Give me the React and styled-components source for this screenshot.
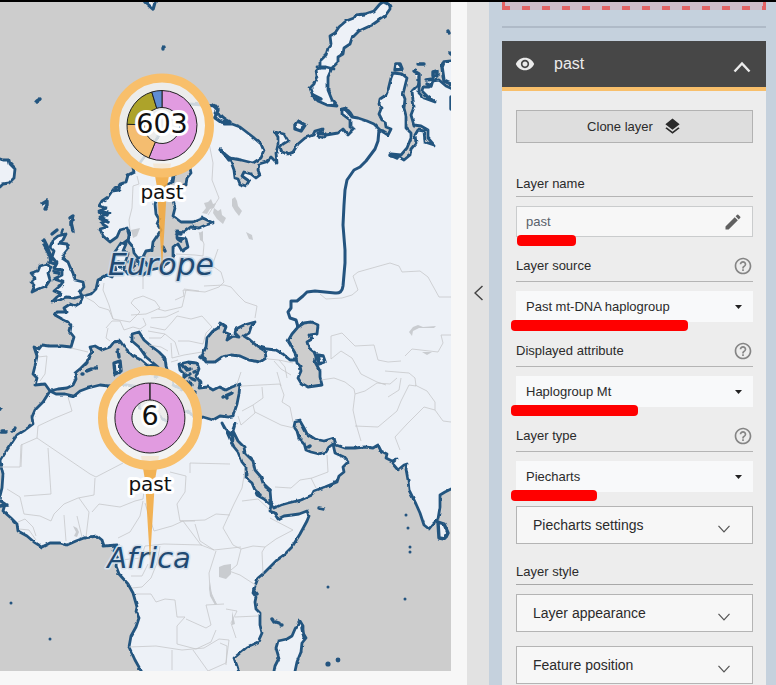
import React from "react";
import styled, { createGlobalStyle } from "styled-components";
import { MdVisibility, MdLayers, MdEdit, MdHelpOutline } from "react-icons/md";

const GlobalStyle = createGlobalStyle`
  *, *::before, *::after { box-sizing: border-box; }
  body {
    margin: 0;
    background: #f7f7f7;
    color: #2b2b2b;
    font-family: "Liberation Sans", Arial, sans-serif;
    font-size: 13px;
  }
  button, input, select { font: inherit; color: inherit; margin: 0; }
`;

const Page = styled.div`
  display: flex;
  height: 100vh;
  border-top: 2px solid #000;
  overflow: hidden;
`;

const MapPane = styled.main`
  flex: 1;
  min-width: 0;
  padding: 0 16px 14px 0;
`;

const MapCanvas = styled.svg`
  display: block;
  width: 100%;
  height: 100%;
  background: #cdcdcd;
  font-family: "DejaVu Sans", sans-serif;
`;

const CollapseHandle = styled.button`
  flex: 0 0 22px;
  display: flex;
  align-items: center;
  justify-content: center;
  padding: 0 0 102px;
  border: 0;
  background: #e2e2e2;
  color: #444;
`;

const Sidebar = styled.aside`
  flex: 0 0 287px;
  padding: 0 10px 0 13px;
  background: #c5d1dd;
  overflow-y: auto;
  scrollbar-width: none;
`;

const DropZone = styled.div`
  height: 8px;
  border: solid #e26464;
  border-width: 0 3px;
  background:
    repeating-linear-gradient(90deg, #e26464 0 5px, transparent 5px 17px, #e26464 17px 20px) bottom / 100% 4px no-repeat,
    #cdbcc8;
`;

const Divider = styled.hr`
  height: 2px;
  margin: 16px 0 13px;
  border: 0;
  background: #afbac7;
`;

const Card = styled.section`
  background: #ededed;
`;

const CardHeader = styled.button`
  display: flex;
  align-items: center;
  width: 100%;
  height: 50px;
  padding: 0 15px 0 13px;
  border: 0;
  border-bottom: 4px solid #f8bf6b;
  background: #474747;
  color: #ececec;
  font-size: 16px;
  text-align: left;
`;

const HeaderTitle = styled.span`
  flex: 1;
  padding-left: 19px;
`;

const HeaderChevron = styled.svg`
  margin-top: 6px;
`;

const CardBody = styled.div`
  display: flex;
  flex-direction: column;
  padding: 19px 13px 12px 14px;
`;

const CloneButton = styled.button`
  display: flex;
  align-items: center;
  justify-content: center;
  gap: 10px;
  height: 33px;
  margin-bottom: 9px;
  border: 1px solid #b2b2b2;
  background: #dedede;
`;

const Field = styled.div`
  margin-top: 19px;
`;

const TitleRow = styled.div`
  display: flex;
  align-items: center;
  justify-content: space-between;
  height: 26px;
  margin-bottom: 9px;
  padding-bottom: ${(p) => (p.$raised ? "6px" : "0")};
  border-bottom: 1px solid #b4b4b4;
`;

const HelpButton = styled.button`
  display: flex;
  padding: 0;
  border: 0;
  background: none;
  color: #858585;
`;

const Control = styled.div`
  position: relative;
`;

const controlIcon = `
  position: absolute;
  top: 50%;
  transform: translateY(-50%);
  pointer-events: none;
`;

const NameInput = styled.input`
  display: block;
  width: 100%;
  height: 31px;
  padding: 0 40px 0 9px;
  border: 1px solid #cacccd;
  border-radius: 0;
  background: #f7f7f7;
  color: #59616a;
`;

const EditIcon = styled(MdEdit)`
  ${controlIcon}
  right: 10px;
  color: #606060;
`;

const Select = styled.select`
  appearance: none;
  display: block;
  width: 100%;
  height: 31px;
  padding: 0 30px 0 10px;
  border: 0;
  border-radius: 0;
  background: #f8f9fa;
`;

const Caret = styled.svg`
  ${controlIcon}
  right: 11px;
`;

const RedMark = styled.span`
  position: absolute;
  bottom: -9px;
  left: ${(p) => p.$left}px;
  width: ${(p) => p.$width}px;
  height: 11px;
  border-radius: 4px;
  background: #f00;
  pointer-events: none;
`;

const StyleHeading = styled.h3`
  display: flex;
  align-items: center;
  height: 26px;
  margin: 15px 0 9px;
  border-bottom: 1px solid #a8a8a8;
  font-size: 13px;
  font-weight: 400;
`;

const Accordion = styled.button`
  display: flex;
  align-items: center;
  justify-content: space-between;
  height: 38px;
  margin-top: ${(p) => p.$gap || 0}px;
  padding: 0 22px 1px 16px;
  border: 1px solid #b4b4b4;
  background: #f7f7f7;
  font-size: 14px;

  svg { margin-top: 8px; }
`;

function ChevronDown() {
  return (
    <svg width="12" height="8" viewBox="0 0 12 8" fill="none" stroke="#555" aria-hidden="true">
      <path d="M0.5 0.8 6 6.8 11.5 0.8" strokeWidth="1.2" />
    </svg>
  );
}

function SelectField({ id, label, options, mark }) {
  return (
    <Field>
      <TitleRow $raised>
        <label htmlFor={id}>{label}</label>
        <HelpButton type="button" aria-label={`Help: ${label}`}>
          <MdHelpOutline size={20} />
        </HelpButton>
      </TitleRow>
      <Control>
        <Select id={id}>
          {options.map((o) => (
            <option key={o}>{o}</option>
          ))}
        </Select>
        <Caret width="7" height="4" viewBox="0 0 7 4" aria-hidden="true">
          <path d="M0 0H7L3.5 4Z" fill="#222" />
        </Caret>
        <RedMark $left={-5} $width={mark} />
      </Control>
    </Field>
  );
}

const MAINLAND = `M216 106 L190 104 178 112 165 126 156 140 148 152 139 164 133 168 134 172 128 175 126 182 120 184
 119 190 112 191 108 197 102 201 99 206 107 208 99 211 109 213 100 217 108 220 101 223 107 227 100 229 103 236 110 242 117 237 120 230 127 228 129 235
 128 241 133 247 134 253 138 258 143 257 146 251 152 250 153 242 157 236 161 230 157 224 159 219 156 214
 155 204 158 196 163 188 172 182 173 176 180 171 190 168 191 173 187 178 186 184 179 187 178 194 173 200 175 208 173 216 181 222 193 222 203 218 213 223
 206 225 199 228 191 227 184 232 177 231 177 238 186 239 188 247 182 251 178 244 173 248 173 258 168 263
 160 268 150 270 143 275 134 272 128 274 124 269 125 262 128 254 123 251 126 244 121 243 117 249 114 253 114 263 116 270 112 277 107 275 98 280 96 289
 91 294 83 296 80 303 75 306 70 304 64 308 66 312 57 312 55 315 62 319 68 322 71 326 70 332 74 337 71 347
 62 346 50 346 42 345 39 349 34 347 37 356 35 366 33 374 37 378 35 385 45 384 50 391
 43 402 35 410 32 417 33 424 25 430 17 435 11 444 7 450 0 461 3 474 2 488 -1 500 5 504 3 511 11 518
 17 524 18 531 27 536 34 542 42 547 50 543 60 543 67 545 76 541 84 538 97 536 102 540 104 546 117 545 113 551 118 558 116 566
 119 574 128 584 133 593 137 607 136 612 139 618 136 627 131 636 129 647 135 660 144 676 L240 676
 237 666 234 658 247 647 258 642 262 633 260 625 260 613 256 609 255 602 256 597 253 593 255 586 258 578
 264 573 277 560 284 555 292 547 300 534 307 521 309 516 307 511 299 514 292 515 284 516 278 519 274 513 270 511 271 505 264 499 257 495 252 483 246 478 246 467
 242 462 238 452 234 447 230 439 226 430 222 423 225 429 232 435 233 440 L232 432 235 424 233 431 238 441 244 447 245 453 253 461 255 470 261 477 263 483 270 490
 271 502 274 508 281 505 288 503 301 500 312 495 314 491 325 487 337 482 339 476 344 472 343 467 348 462 344 457 335 453 333 444 329 447 326 452
 319 454 311 452 306 450 304 443 299 438 297 431 294 427 295 422 300 421 304 428 307 434 315 439 324 441
 334 438 336 445 345 448 355 448 365 447 373 448 378 445 381 451 387 454 386 458 392 461 397 459 392 463 398 470
 404 465 407 464 406 469 408 480 409 490 416 504 420 513 424 525 429 529 433 524 438 519 440 507 440 495 445 492 455 487
 L455 90 446 86 439 80 432 81 430 87 423 87 422 91 428 97 435 102 424 98 419 93 419 84 412 91 413 100 414 107 411 115 414 125
 421 126 428 130 428 138 434 145 425 142 424 131 418 130 415 135 416 143 411 149 410 155 404 160 399 157 390 156 391 154 401 155
 407 148 411 138 411 133 406 128 406 116 404 108 405 99 403 94 407 78 402 74 393 73 391 78 388 90 386 95 380 99 379 104 381 109
 379 114 382 120 385 121 386 127 391 129 388 135 380 130 374 124 367 121 358 118 352 117 345 109 342 109 342 114 350 120
 350 127 354 129 348 135 343 129 338 133 326 135 324 138 318 136 322 129 315 131 313 135 305 138 298 144 293 152 288 154 282 152
 280 147 283 144 288 141 284 134 275 132 278 137 278 145 276 153 277 163 271 157 266 162 259 164 258 170 260 175 256 178 251 174
 244 172 242 176 249 181 246 186 240 184 238 179 235 178 234 170 230 159 221 151 230 158 241 160 253 163 261 158 264 151
 261 144 253 137 240 127 232 124 224 124 227 121 221 115 214 113 217 108Z`;

const MEDITERRANEAN = `M50 391 L58 389 67 388 73 385 76 379 75 373 81 368 87 362 89 356 92 352 90 347 95 346 102 350 110 347 114 342 120 341 125 348
 133 356 141 360 148 366 154 365 158 371 155 377 161 374 158 367 152 362 146 357 139 347 132 341 132 334 139 332 144 340 151 346 159 352 165 358 166 366 168 373
 173 379 174 385 181 389 185 388 181 380 186 376 180 370 179 364 188 362 197 363 199 369 196 376 200 382 199 388 208 387 213 390
 219 387 226 390 232 387 240 384 239 394 237 404 233 416 228 417 220 416 213 420 203 417 197 420 188 411 178 414
 176 424 166 421 155 412 139 408 140 399 142 388 133 386 120 384 109 386 100 385 88 388 80 391 74 396 65 394 56 394Z`;

const BLACK_SEA = `M206 362 L202 355 206 347 207 338 213 331 218 328 220 323 226 327 224 332 229 334 227 340 233 336 239 337
 235 333 236 329 244 325 255 322 251 327 249 333 244 336 250 340 257 346 265 351 266 358 260 362 249 360 240 356 231 355 222 357 215 362Z`;

const CASPIAN = `M298 327 L304 323 311 322 318 325 317 334 310 335 312 339 307 342 309 348 314 352 316 357 315 362 320 371 320 377
 322 385 315 386 308 387 301 383 298 378 301 371 300 366 297 363 295 353 291 346 288 341 292 334Z`;

const NOVAYA_ZEMLYA = `M383 2 Q391 3 390 9 L385 16 372 25 359 31 352 38 350 44 344 48 343 54 338 57 338 62 332 68 328 77 328 90 332 100
 337 106 327 105 318 101 313 96 310 88 314 84 317 76 316 70 320 66 320 61 326 55 328 48 331 44 330 36 335 33 339 27 346 21 354 18
 356 15 365 14 374 11 380 4Z`;

const BRITAIN = `M53 240 L58 236 66 234 63 240 59 243 67 244 68 249 64 254 62 258 68 262 70 267 73 273 75 280 83 282 84 287 80 292
 82 296 75 298 66 297 60 300 52 302 57 297 61 294 54 291 60 286 63 282 54 279 62 275 62 270 54 269 57 263 52 257 54 251 50 247Z`;

const IRELAND = "M31 273 L38 271 40 266 47 264 51 268 48 273 50 280 46 286 38 289 32 292 35 285 31 282 35 278Z";
const ICELAND = "M-3 158 L3 160 9 160 10 164 15 169 14 178 9 183 3 184 0 187 -3 187Z";
const MADAGASCAR = "M300 621 L303 626 303 633 306 638 302 643 301 652 297 662 294 676 L273 676 275 666 279 658 276 648 278 641 287 639 292 636 295 629Z";

const RUSSIAN_BORDER = `M379 130 L378 141 375 149 366 161 360 167 354 170 347 180 345 190 344 205 343 225 345 250 345 263 343 286
 Q342 294 335 293 L315 291 307 292 303 296 297 301 291 301 291 308 288 312 290 318 296 320 298 327`;

const BORDERS = [
  "M137 176 L139 184 133 186 132 208 129 220 130 230",
  "M209 143 L213 163 212 180 219 198 208 215",
  "M176 254 L195 255 203 256 204 244 199 232",
  "M143 273 L143 289 M104 283 L103 290 109 305 113 319 M113 319 L130 322 140 312 131 303 134 299 143 296 155 301 160 308 151 312 146 314 131 315",
  "M85 297 L94 302 99 307 109 310 113 319 M71 348 L88 352",
  "M108 328 L106 338 110 341 M106 328 L112 321 120 321 124 330 133 327 140 329 146 325 143 318",
  "M182 307 L165 311 158 309 M151 318 L166 317 179 311 M175 300 L184 296 183 290 205 292 219 287 224 282 221 272 214 267",
  "M150 327 L165 330 173 321 177 316 191 319 202 316 212 327 206 333 203 344 189 341 178 341",
  "M148 331 L165 334 161 338 149 338 M149 345 L161 347 168 351 M165 334 L175 342 179 355 M171 343 L172 358 184 355 202 352 M171 362 L178 360",
  "M182 307 L186 290 M184 289 L199 291 M204 286 L224 285 231 287 238 295 245 302 257 306 255 318",
  "M218 249 L211 269 M38 357 L47 356 45 374 40 381",
  "M268 359 L279 360 285 367 287 378 M274 361 L281 369 291 375 M279 360 L293 363",
  "M240 388 L242 386 280 384 M262 387 L263 398 253 405 242 411 M253 405 L255 413 241 425 238 416 M255 412 L281 425 294 428",
  "M280 384 L284 395 282 402 290 407 293 422 M277 372 L281 386",
  "M321 380 L334 378 345 382 354 389 355 394 353 410 356 424 361 441 M355 394 L365 391 377 383 390 384 397 378",
  "M331 359 L331 336 342 333 355 346 374 345 378 360 388 362 401 361 M331 359 L341 351 352 358 361 374 377 382 386 385",
  "M320 294 L326 299 342 298 352 295 358 290 353 276 358 272 390 263 399 266 402 272 420 271 428 277 439 297 451 297",
  "M405 356 L412 349 438 352 443 343 441 335 451 335 M385 371 L409 373 415 378 416 386 409 385 401 401 397 411 378 427 355 426",
  "M401 378 L399 390 388 397 M415 385 L427 391 435 402 435 410 443 421 451 422 M435 410 L424 407 407 424 395 437 400 450",
  "M293 347 L298 352 M241 372 L236 387",
  "M68 397 L72 411 55 418 38 426 37 438 21 445 20 467 0 467",
  "M37 438 L90 474 96 477 123 463 M48 448 L51 494 24 496 M22 444 L21 467",
  "M95 478 L94 495 78 498 64 504 54 514 51 521 40 516 24 514 20 497 7 489",
  "M79 498 L89 512 86 537 M64 515 L66 541 M77 516 L82 537 M92 512 L99 504 120 507 135 501 143 499 144 491",
  "M170 472 L186 476 185 492 177 504 180 521 195 521 M190 463 L230 464 M190 463 L190 473 M245 470 L242 488 234 504",
  "M143 501 L140 516 130 532 118 538 M145 503 L150 519 154 531 172 526 183 521 201 545 214 550 M120 560 L141 558 145 546 164 544 202 545",
  "M160 546 L157 563 151 578 142 587 132 588 M131 576 L142 576 148 564",
  "M180 521 L205 520 216 514 230 515 M195 524 L200 541 214 550 241 547 M216 551 L209 573 210 590 216 604",
  "M136 594 L151 594 156 602 165 599 175 600 177 617 185 617 177 626 177 644 196 649 211 642 216 630 M186 619 L206 628 211 625 206 605 224 604",
  "M129 647 L156 646 182 650 204 648 219 639 229 640 M172 650 L172 670 M193 650 L208 671 226 663 229 640",
  "M275 487 L291 488 300 480 312 478 328 472 327 455 M311 478 L316 488",
  "M242 501 L258 499 270 510 M234 504 L223 528 233 545 241 549 253 546 265 547 276 539 293 530 270 518",
  "M229 571 L240 575 257 586 M235 617 L258 616 M265 547 L262 552 263 574 M241 549 L237 565 231 570",
  "M226 609 L237 611 231 623 236 638 M220 643 L227 646 226 665",
  "M18 522 L25 519 33 527 36 536 M19 529 L29 530 36 540",
];

const LAKES = [
  "M204 203 L208 202 211 199 213 204 216 203 214 208 210 209 207 214 202 213 206 208Z",
  "M214 208 L218 211 221 209 222 215 226 218 223 224 217 219 213 213Z",
  "M232 199 L235 197 237 201 238 206 242 211 239 216 235 211 232 206Z",
  "M246 232 L252 235 253 240 249 239Z",
  "M131 230 L140 228 137 236 133 238Z",
  "M199 233 L203 231 203 242 200 240Z",
  "M409 332 L413 327 418 325 423 327 436 326 434 328 419 328 413 331 412 336Z",
  "M422 352 L432 352 427 355Z",
  "M219 567 L224 565 231 564 231 574 226 579 219 577Z",
  "M210 582 L212 595 217 604 215 605 210 596 209 588Z",
  "M73 526 L77 528 79 532 77 537 74 536 76 532Z",
  "M232 611 L235 624 232 625Z",
];

const ISLANDS = [
  "M36 102 L37 101 40 99 M42 204 L47 201 47 205 45 209 M70 218 L73 216 71 224 M63 230 L62 233 M52 234 L57 230",
  "M44 240 L47 246 49 252 51 262 M44 245 L50 256 M50 262 L55 264 M54 272 L59 273",
  "M73 231 L71 222 M145 2 L153 9 155 2 M163 48 L163 49",
  "M213 105 L218 110 216 115 M214 117 L221 122 228 123 M220 116 L230 122 M221 150 L226 156 229 160",
  "M295 125 L298 121 305 125 301 131 295 129Z",
  "M344 109 Q349 110 352 116",
  "M395 70 L396 64 400 64 402 69Z M418 64 L425 64 M414 71 L419 74 419 85 M433 72 L437 71 437 76 433 76Z M426 80 L433 79 431 86 427 84",
  "M453 61 L444 62 442 67 444 81 453 85 M448 31 L449 33 M451 97 L451 109 M450 53 L451 54",
  "M118 350 L119 357 M114 363 L120 361 121 371 115 374Z M82 374 L83 374 M87 371 L92 369 M95 368 L96 368",
  "M182 365 L186 370 191 369 M184 376 L190 374 M186 382 L192 385 M188 391 L194 393 M197 371 L194 372 M223 397 L232 393 226 396 227 398 M190 378 L195 380",
  "M0 409 L1 409 M1 432 L6 432 M12 431 L15 428 M0 506 L7 505",
  "M317 355 L323 356 325 362 319 364Z",
  "M438 522 L444 524 448 533 445 539 439 538Z",
  "M319 508 L324 509 M272 619 L274 622 M276 622 L279 623 M281 625 L282 625",
  "M124 243 L128 240 M129 262 L134 262 133 267 M137 260 L141 267 M118 262 L121 268 M145 262 L148 266 M163 247 L165 251 M176 233 L181 234",
  "M200 357 L205 360 M178 239 L181 241 M100 212 L107 215 M101 219 L108 222 M115 188 L123 184",
  "M257 493 L260 495 M266 487 L270 490 M254 590 L257 594 M307 448 L310 446 M302 628 L304 638",
  "M313 95 L321 99 316 99 M390 155 L397 158 M325 134 L318 133",
];

const DOTS = [
  [11, 603], [50, 639], [328, 587], [405, 599], [406, 515], [408, 528], [410, 547], [410, 552],
];

const PAST_SLICES = [
  { from: 0, to: 202, color: "#e19be0" },
  { from: 202, to: 272, color: "#f4bd70" },
  { from: 272, to: 343, color: "#ada32a" },
  { from: 343, to: 360, color: "#5f8dd3" },
];
const FULL_SLICE = [{ from: 0, to: 360, color: "#e19be0" }];

const OUTER = 35;
const INNER = 18;

function polar(r, deg) {
  const a = ((deg - 90) * Math.PI) / 180;
  return `${(r * Math.cos(a)).toFixed(3)} ${(r * Math.sin(a)).toFixed(3)}`;
}

function slicePath({ from, to }) {
  const end = to - from >= 360 ? to - 0.3 : to;
  const large = end - from > 180 ? 1 : 0;
  return `M${polar(INNER, from)}L${polar(OUTER, from)}A${OUTER} ${OUTER} 0 ${large} 1 ${polar(OUTER, end)}L${polar(INNER, end)}A${INNER} ${INNER} 0 ${large} 0 ${polar(INNER, from)}Z`;
}

const MapText = styled.text`
  text-anchor: middle;
  paint-order: stroke;
  stroke: ${(p) => p.$halo || "#fff"};
  stroke-width: ${(p) => p.$spread}px;
  stroke-linejoin: round;
  fill: ${(p) => p.$color || "#111"};
  font-size: ${(p) => p.$size}px;
  font-style: ${(p) => (p.$slanted ? "italic" : "normal")};
`;

function PieMarker({ x, y, tail, count, slices }) {
  return (
    <g transform={`translate(${x} ${y})`}>
      <path d={`M-9 38H9L5 62 0 ${tail} -5 62Z`} fill="#f3a83d" fillOpacity="0.88" />
      <circle r="45" fill="#f3f3f2" fillOpacity="0.82" />
      <circle r="47.5" fill="none" stroke="#f8bf6b" strokeWidth="9" />
      {slices.map((s) => (
        <path key={s.from} d={slicePath(s)} fill={s.color} stroke="#222" strokeWidth="1" />
      ))}
      <MapText y="7" $size={27} $spread={6}>{count}</MapText>
      <MapText y="73" $size={20} $spread={6}>past</MapText>
    </g>
  );
}

function WorldMap() {
  return (
    <MapCanvas viewBox="0 2 451 669" preserveAspectRatio="xMidYMid slice" role="img" aria-label="Map of Europe and Africa">
      <defs>
        <filter id="ragged" x="-5%" y="-5%" width="110%" height="110%">
          <feTurbulence type="fractalNoise" baseFrequency="0.18" numOctaves="1" seed="4" result="noise" />
          <feDisplacementMap in="SourceGraphic" in2="noise" scale="3" xChannelSelector="R" yChannelSelector="G" />
        </filter>
      </defs>
      <g filter="url(#ragged)" stroke="#24547f" strokeWidth="2.8" strokeLinejoin="round" strokeLinecap="round" fill="#edf1f7">
        <path d={MAINLAND} />
        {[BRITAIN, IRELAND, ICELAND, NOVAYA_ZEMLYA, MADAGASCAR].map((d) => (
          <path key={d.slice(0, 16)} d={d} />
        ))}
        {[MEDITERRANEAN, BLACK_SEA, CASPIAN].map((d) => (
          <path key={d.slice(0, 16)} d={d} fill="#cdcdcd" />
        ))}
        <path d="M317 67 L326 67 334 69" fill="none" />
        <path d="M257 346 L267 349 276 350 283 354 290 360 296 360" fill="none" />
        <g strokeWidth="3.4">
          {ISLANDS.map((d) => (
            <path key={d} d={d} />
          ))}
        </g>
      </g>
      <path d={RUSSIAN_BORDER} fill="none" stroke="#24547f" strokeWidth="3" strokeLinejoin="round" />
      <g fill="none" stroke="#c6c8ca" strokeWidth="0.8" strokeLinejoin="round">
        {BORDERS.map((d) => (
          <path key={d} d={d} />
        ))}
      </g>
      <g fill="#c9ccd0">
        {LAKES.map((d) => (
          <path key={d} d={d} />
        ))}
      </g>
      <g fill="#24547f">
        {DOTS.map(([x, y]) => (
          <circle key={`${x}-${y}`} cx={x} cy={y} r="1.5" />
        ))}
        <circle cx="328" cy="664" r="2.6" />
        <circle cx="338" cy="660" r="2.4" />
      </g>
      <MapText x="161" y="275" $size={30} $spread={3} $slanted $color="#1f4a73" $halo="#c9d8e6">Europe</MapText>
      <MapText x="149" y="568" $size={29} $spread={3} $slanted $color="#1f4a73" $halo="#d5e1ec">Africa</MapText>
      <PieMarker x={162} y={125.5} tail={143} count="603" slices={PAST_SLICES} />
      <PieMarker x={150} y={418} tail={143} count="6" slices={FULL_SLICE} />
    </MapCanvas>
  );
}

export default function App() {
  return (
    <>
      <GlobalStyle />
      <Page>
        <MapPane>
          <WorldMap />
        </MapPane>
        <CollapseHandle type="button" aria-label="Toggle side panel">
          <svg width="9" height="16" viewBox="0 0 9 16" fill="none" stroke="currentColor" strokeWidth="1.5">
            <path d="M8.5 1 1 8 8.5 15" />
          </svg>
        </CollapseHandle>
        <Sidebar>
          <DropZone />
          <Divider />
          <Card>
            <CardHeader type="button" aria-expanded="true">
              <MdVisibility size={20} />
              <HeaderTitle>past</HeaderTitle>
              <HeaderChevron width="18" height="12" viewBox="0 0 18 12" fill="none" stroke="currentColor" strokeWidth="2.4" aria-hidden="true">
                <path d="M1.5 10.5 9 2.5 16.5 10.5" />
              </HeaderChevron>
            </CardHeader>
            <CardBody>
              <CloneButton type="button">
                Clone layer
                <MdLayers size={19} />
              </CloneButton>
              <Field>
                <TitleRow>
                  <label htmlFor="layer-name">Layer name</label>
                </TitleRow>
                <Control>
                  <NameInput id="layer-name" type="text" defaultValue="past" />
                  <EditIcon size={20} />
                  <RedMark $left={1} $width={59} />
                </Control>
              </Field>
              <SelectField id="layer-source" label="Layer source" options={["Past mt-DNA haplogroup"]} mark={177} />
              <SelectField id="displayed-attribute" label="Displayed attribute" options={["Haplogroup Mt"]} mark={127} />
              <SelectField id="layer-type" label="Layer type" options={["Piecharts"]} mark={86} />
              <Accordion type="button" aria-expanded="false" $gap={14}>
                Piecharts settings
                <ChevronDown />
              </Accordion>
              <StyleHeading>Layer style</StyleHeading>
              <Accordion type="button" aria-expanded="false">
                Layer appearance
                <ChevronDown />
              </Accordion>
              <Accordion type="button" aria-expanded="false" $gap={14}>
                Feature position
                <ChevronDown />
              </Accordion>
            </CardBody>
          </Card>
        </Sidebar>
      </Page>
    </>
  );
}
